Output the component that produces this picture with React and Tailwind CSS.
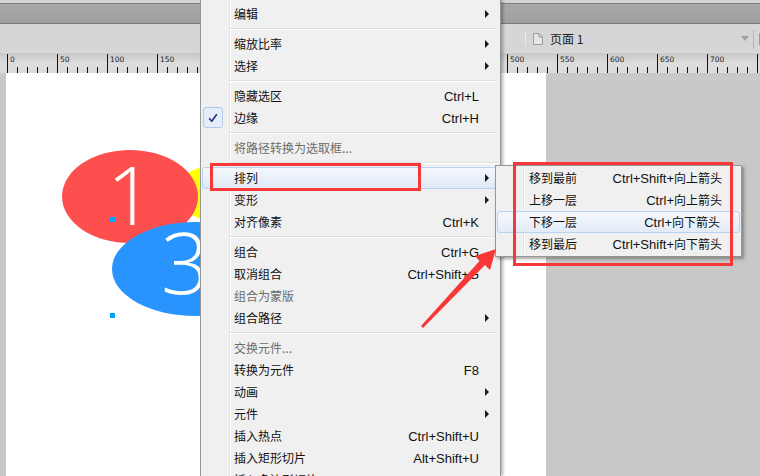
import React from 'react';

const cjk = { fontFamily: '"Noto Sans CJK SC", "Noto Sans", sans-serif' };
const latin = { fontFamily: '"Liberation Sans", Arial, sans-serif' };

const menuItems = [
  { t: '编辑', sub: true },
  'sep',
  { t: '缩放比率', sub: true },
  { t: '选择', sub: true },
  'sep',
  { t: '隐藏选区', k: 'Ctrl+L' },
  { t: '边缘', k: 'Ctrl+H', checked: true },
  'sep',
  { t: '将路径转换为选取框...', off: true },
  'sep',
  { t: '排列', sub: true, hot: true },
  { t: '变形', sub: true },
  { t: '对齐像素', k: 'Ctrl+K' },
  'sep',
  { t: '组合', k: 'Ctrl+G' },
  { t: '取消组合', k: 'Ctrl+Shift+G' },
  { t: '组合为蒙版', off: true },
  { t: '组合路径', sub: true },
  'sep',
  { t: '交换元件...', off: true },
  { t: '转换为元件', k: 'F8' },
  { t: '动画', sub: true },
  { t: '元件', sub: true },
  { t: '插入热点', k: 'Ctrl+Shift+U' },
  { t: '插入矩形切片', k: 'Alt+Shift+U' },
  { t: '插入多边形切片', k: 'Alt+Shift+P' },
];

const subItems = [
  { t: '移到最前', pre: 'Ctrl+Shift+', post: '向上箭头' },
  { t: '上移一层', pre: 'Ctrl+', post: '向上箭头' },
  { t: '下移一层', pre: 'Ctrl+', post: '向下箭头', hot: true },
  { t: '移到最后', pre: 'Ctrl+Shift+', post: '向下箭头' },
];

function Ruler() {
  const ticks = [];
  for (let x = 7; x < 760; x += 10) {
    const major = (x - 7) % 50 === 0;
    ticks.push(
      <line key={x} x1={x + 0.5} x2={x + 0.5} y1={major ? 1 : 14} y2={20} stroke="#111" strokeWidth="1" />
    );
    if (major) {
      ticks.push(
        <text key={'t' + x} x={x + 3} y={9} fontSize="7.5" fill="#222" fontFamily="DejaVu Sans, sans-serif">
          {x - 7}
        </text>
      );
    }
  }
  return (
    <div className="h-[20px] bg-gradient-to-b from-[#c9c9c9] via-[#dcdcdc] to-[#dcdcdc]">
      <svg width="760" height="20">{ticks}</svg>
    </div>
  );
}

function Arrow() {
  return (
    <svg width="7" height="8" viewBox="0 0 7 8" className="block">
      <path d="M1 0 L5 4 L1 8 Z" fill="#1a1a1a" />
    </svg>
  );
}

function MainMenu() {
  return (
    <div className="absolute left-[200px] top-0 w-[301px] h-[476px] bg-[#f0f0f0] border-x border-[#979797] shadow-[2px_0_3px_rgba(0,0,0,0.3)] pt-[3px]">
      <div className="absolute left-[28px] top-0 bottom-0 w-[2px] border-l border-[#e2e3e3] bg-white" />
      {menuItems.map((it, i) => {
        if (it === 'sep')
          return (
            <div key={i} className="h-[8px] flex flex-col justify-center ml-[28px] mr-[2px] relative">
              <div className="h-px bg-[#e0e0e0]" />
              <div className="h-px bg-white" />
            </div>
          );
        return (
          <div
            key={i}
            className={
              'relative h-[22px] flex items-center ' +
              (it.hot
                ? 'mx-[1px] -mr-[4px] rounded-[3px] border border-[#b7d4f4] bg-gradient-to-b from-[#f4f8fc] to-[#dfe9f6] pl-[31px]'
                : 'pl-[33px]')
            }
          >
            {it.checked && (
              <div className="absolute left-[2px] top-[0px] w-[20px] h-[21px] rounded-[3px] border border-[#aecbef] bg-[#e5edf9] flex items-center justify-center">
                <svg width="10" height="10" viewBox="0 0 10 10">
                  <path d="M1.2 5.2 L3.8 8.3 L8.8 1.2" fill="none" stroke="#1d2d8c" strokeWidth="1.6" />
                </svg>
              </div>
            )}
            <span
              className={'flex-1 whitespace-nowrap text-[12px] leading-none ' + (it.off ? 'text-[#6d6d6d]' : 'text-[#111]')}
              style={cjk}
            >
              {it.t}
            </span>
            <span className="whitespace-nowrap text-[13px] leading-none text-[#111]" style={latin}>
              {it.k}
            </span>
            <div className={'w-[21px] pl-[5px] ' + (it.hot ? 'mr-[3px]' : '')}>{it.sub && <Arrow />}</div>
          </div>
        );
      })}
    </div>
  );
}

function SubMenu() {
  return (
    <div className="absolute left-[495px] top-[165px] w-[247px] h-[92px] bg-[#f0f0f0] border border-[#979797] shadow-[2px_2px_3px_rgba(0,0,0,0.35)] pt-[1px]">
      <div className="absolute left-[27px] top-[2px] bottom-[2px] w-[2px] border-l border-[#e2e3e3] bg-white" />
      {subItems.map((it, i) => (
        <div
          key={i}
          className={
            'relative h-[22px] flex items-center pr-[19px] ' +
            (it.hot
              ? 'mx-[1px] rounded-[3px] border border-[#b7d4f4] bg-gradient-to-b from-[#f4f8fc] to-[#e3ecf7] pl-[31px]'
              : 'pl-[33px]')
          }
        >
          <span className="flex-1 whitespace-nowrap text-[12px] leading-none text-[#111]" style={cjk}>
            {it.t}
          </span>
          <span className="whitespace-nowrap text-[13px] leading-none text-[#111]" style={latin}>
            {it.pre}
            <span className="text-[12px]" style={cjk}>
              {it.post}
            </span>
          </span>
        </div>
      ))}
    </div>
  );
}

export default function App() {
  return (
    <div className="relative w-[760px] h-[476px] overflow-hidden bg-[#c8c8c8]">
      <div className="h-[3px] bg-[#d4d4d4]" />
      <div className="h-[21px] bg-gradient-to-b from-[#a9a9a9] to-[#9f9f9f] border-t border-[#7e7e7e] border-b border-b-[#7a7a7a]" />
      <div className="h-[29px] bg-[#d6d6d6] flex items-center">
        <div className="ml-[525px] w-px h-[14px] bg-[#bdbdbd] border-r border-[#ececec]" />
        <svg width="10" height="12" viewBox="0 0 10 12" className="ml-[7px] shrink-0">
          <path d="M0.5 0.5 H6 L9.5 4 V11.5 H0.5 Z M6 0.5 V4 H9.5" fill="#e6e6e6" stroke="#9c9c9c" />
        </svg>
        <span className="ml-[7px] whitespace-nowrap text-[12px] leading-none text-[#1a1a1a]" style={cjk}>
          页面 1
        </span>
        <svg width="8" height="5" viewBox="0 0 8 5" className="ml-[158px] shrink-0">
          <path d="M0 0 H8 L4 5 Z" fill="#a3a3a3" />
        </svg>
        <div className="ml-[4px] w-px h-[18px] shrink-0 bg-[#b5b5b5]" />
        <div className="ml-[5px] w-[4px] h-[12px] shrink-0 border border-[#9b9b9b] bg-[#e4e4e4]" />
      </div>
      <Ruler />
      <div className="flex h-[403px]">
        <div className="w-[6px] bg-[#c8c8c8]" />
        <div className="relative w-[540px] bg-white">
          <div className="absolute left-[168px] top-[89px] w-[120px] h-[62px] rounded-[50%] bg-[#ffff00]" />
          <div className="absolute left-[56px] top-[77px] w-[136px] h-[93px] rounded-[50%] bg-[#fe4f4f]" />
          <div
            className="absolute left-[101px] top-[79px] text-[82px] leading-none font-light text-white"
            style={{ fontFamily: '"Open Sans", sans-serif' }}
          >
            1
          </div>
          <div className="absolute left-[106px] top-[149px] w-[166px] h-[94px] rounded-[50%] bg-[#2a94fe]" />
          <div
            className="absolute left-[155px] top-[147px] text-[84px] leading-none font-light text-white"
            style={{ fontFamily: '"Open Sans", sans-serif' }}
          >
            3
          </div>
          <div className="absolute left-[104px] top-[144px] w-[5px] h-[5px] bg-[#00a2ff]" />
          <div className="absolute left-[104px] top-[240px] w-[5px] h-[5px] bg-[#00a2ff]" />
        </div>
        <div className="flex-1 bg-[#c8c8c8]" />
      </div>

      <MainMenu />
      <SubMenu />

      <div className="absolute left-[210px] top-[163px] w-[211px] h-[28px] border-[3px] border-[#f83838]" />
      <div className="absolute left-[513px] top-[162px] w-[220px] h-[104px] border-[3px] border-[#f83838]" />
      <svg className="absolute left-0 top-0" width="760" height="476">
        <path d="M421 326 L479.5 261 L475 256 L496 249 L490 270 L485 265 L423 328 Z" fill="#f83838" />
      </svg>
    </div>
  );
}
